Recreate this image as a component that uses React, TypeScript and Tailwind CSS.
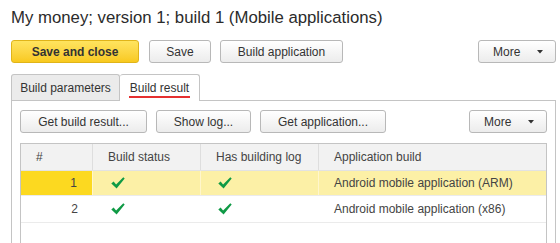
import React from 'react';

const Check = () => (
  <svg width="14" height="12" viewBox="0 0 14 12" className="block">
    <path d="M0.3 6.4 L2.6 4.6 L5.1 7.4 L12.3 0.2 L13.7 1.4 L5.6 11.6 Z" fill="#0f9a45" />
  </svg>
);

const Caret = () => (
  <svg width="6" height="4" viewBox="0 0 6 4" className="block">
    <path d="M0 0 H6 L3 3.5 Z" fill="#333" />
  </svg>
);

const btn =
  'h-[23px] rounded-[3px] border border-[#b8b8b8] bg-gradient-to-b from-[#ffffff] to-[#ececec] text-[12px] text-[#333] flex items-center justify-center shrink-0';

const MoreButton = () => (
  <div className={`${btn} w-[78px] justify-start pl-[14px] gap-[17px]`}>
    <span>More</span>
    <Caret />
  </div>
);

const App = () => {
  const rows = [
    { n: 1, app: 'Android mobile application (ARM)', selected: true },
    { n: 2, app: 'Android mobile application (x86)', selected: false },
  ];

  return (
    <div className="w-[560px] h-[243px] overflow-hidden bg-white text-[#333] font-['Liberation_Sans',Arial,sans-serif]">
      {/* Title */}
      <div className="pt-[8px] pl-[11px] h-[28px] text-[16.75px] leading-[20px] text-[#2b2b2b] whitespace-nowrap">
        My money; version 1; build 1 (Mobile applications)
      </div>

      {/* Command bar */}
      <div className="mt-[12px] ml-[11px] w-[545px] flex items-center">
        <div className="h-[23px] w-[128px] rounded-[3px] border border-[#e0b419] bg-gradient-to-b from-[#ffe45e] to-[#f8c91c] text-[12px] font-bold text-[#333] flex items-center justify-center">
          Save and close
        </div>
        <div className={`${btn} w-[62px] ml-[10px]`}>Save</div>
        <div className={`${btn} w-[123px] ml-[9px]`}>Build application</div>
        <div className="flex-1" />
        <MoreButton />
      </div>

      {/* Tabs */}
      <div className="mt-[10px] ml-[11px] flex items-end h-[27px]">
        <div className="h-[26px] w-[109px] rounded-t-[3px] border border-b-0 border-[#c4c4c4] bg-[#ebebeb] text-[12px] flex items-center justify-center">
          Build parameters
        </div>
        <div className="relative -mb-px h-[27px] w-[80px] rounded-t-[3px] border border-l-0 border-b-0 border-[#c4c4c4] bg-white text-[12px] flex items-center justify-center z-10">
          <span className="border-b-2 border-[#e53030] px-[1px] leading-[14px] pb-[1px] mt-[3px]">Build result</span>
        </div>
      </div>

      {/* Panel */}
      <div className="ml-[11px] w-[545px] h-[200px] border border-b-0 border-[#c4c4c4] pt-[9px] px-[8px]">
        <div className="flex items-center">
          <div className={`${btn} w-[127px]`}>Get build result...</div>
          <div className={`${btn} w-[95px] ml-[9px]`}>Show log...</div>
          <div className={`${btn} w-[126px] ml-[9px]`}>Get application...</div>
          <div className="flex-1" />
          <MoreButton />
        </div>

        {/* Table */}
        <div className="mt-[10px] h-[120px] border border-b-0 border-[#c4c4c4] text-[12px] text-[#444]">
          <div className="grid grid-cols-[72px_108px_118px_1fr] h-[27px] bg-[#f2f2f2] border-b border-[#e2e2e2]">
            <div className="pl-[15px] flex items-center border-r border-[#dedede]">#</div>
            <div className="pl-[15px] flex items-center border-r border-[#dedede]">Build status</div>
            <div className="pl-[15px] flex items-center border-r border-[#dedede]">Has building log</div>
            <div className="pl-[15px] flex items-center">Application build</div>
          </div>
          {rows.map((r) => (
            <div
              key={r.n}
              className={`grid grid-cols-[72px_108px_118px_1fr] border-b border-[#ebebeb] ${
                r.selected ? 'h-[25px] bg-[#fcf0a6]' : 'h-[27px] bg-white'
              }`}
            >
              <div
                className={`pr-[15px] flex items-center justify-end ${
                  r.selected ? 'bg-[#fcd920] border-r border-[#fff6cc]' : ''
                }`}
              >
                {r.n}
              </div>
              <div className={`pl-[18px] flex items-center ${r.selected ? 'border-r border-[#fff6cc]' : ''}`}>
                <Check />
              </div>
              <div className={`pl-[17px] flex items-center ${r.selected ? 'border-r border-[#fff6cc]' : ''}`}>
                <Check />
              </div>
              <div className="pl-[15px] flex items-center">{r.app}</div>
            </div>
          ))}
        </div>
      </div>
    </div>
  );
};

export default App;
